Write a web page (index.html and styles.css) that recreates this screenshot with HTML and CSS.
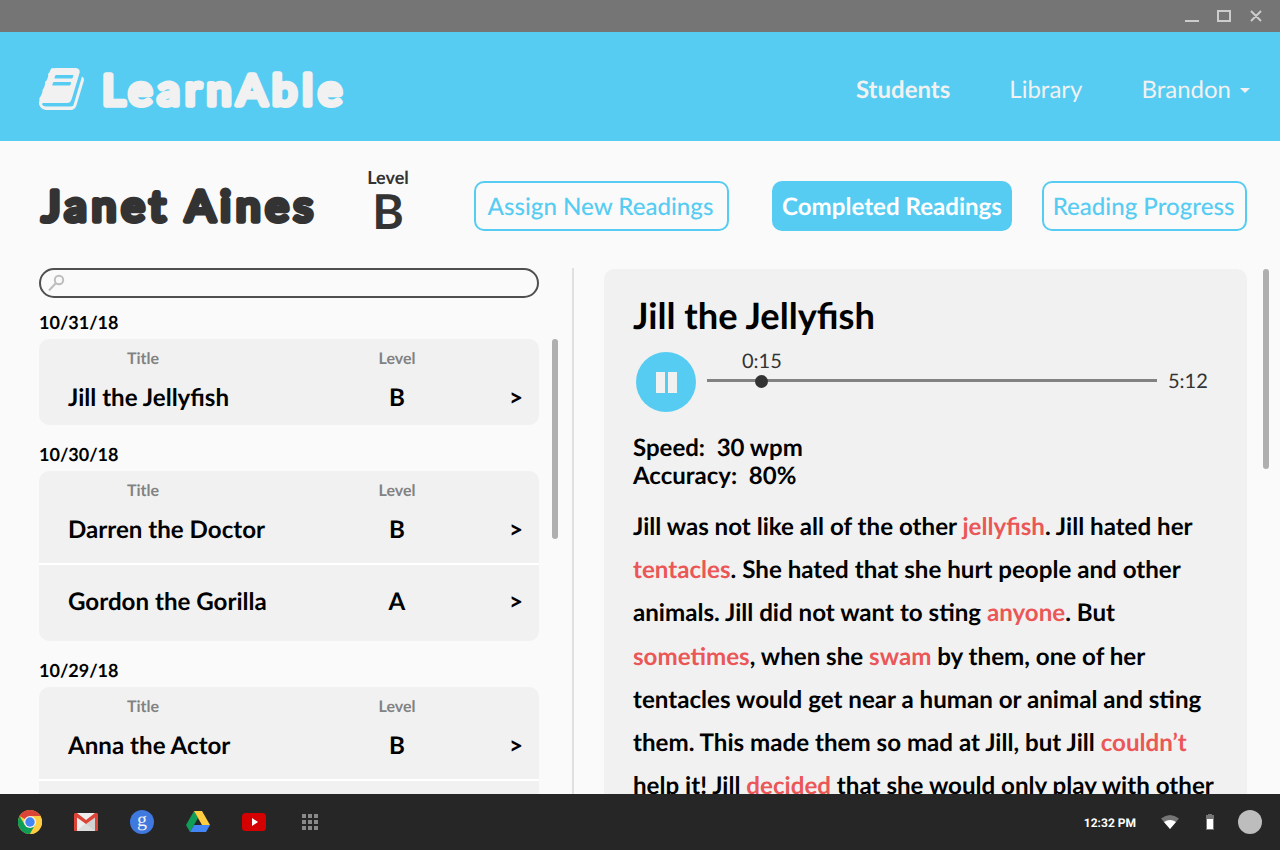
FILE: index.html
```html
<!DOCTYPE html>
<html lang="en">
<head>
<meta charset="utf-8">
<title>LearnAble</title>
<link rel="stylesheet" href="styles.css">
</head>
<body>
<div class="titlebar">
  <svg width="80" height="16" viewBox="0 0 80 16" fill="none" stroke="#ccc" stroke-width="2"><path d="M0 13h14M33 3h12v10H33zM66 3l10 10M76 3L66 13"/></svg>
</div>
<header class="header">
  <div class="brand">
    <svg class="book" viewBox="0 128 1665 1536" preserveAspectRatio="none"><path fill="#f1f1f1" d="M1639 478q40 57 18 129l-275 906q-19 64-76.5 107.5t-122.5 43.5h-923q-77 0-148.5-53.5t-99.5-131.5q-24-67-2-127 0-4 3-27t4-37q1-8-3-21.5t-3-19.5q2-11 8-21t16.5-23.5 16.5-23.5q23-38 45-91.5t30-91.5q3-10 .5-30t-.5-28q3-11 17-28t17-23q21-36 42-92t25-90q1-9-2.5-32t.5-28q4-13 22-30.5t22-22.5q19-26 42.5-84.5t27.5-96.5q1-8-3-25.5t-2-26.5q2-8 9-18t18-23 17-21q8-12 16.5-30.5t15-35 16-36 19.5-32 26.5-23.5 36-11.5 47.5 5.5l-1 3q38-9 51-9h761q74 0 114 56t18 130l-274 906q-36 119-71.5 153.5t-128.5 34.5h-869q-27 0-38 15-11 16-1 43 24 70 144 70h923q29 0 56-15.5t35-41.5l300-987q7-22 5-57 38 15 59 43zm-1064 2q-4 13 2 22.5t20 9.5h608q13 0 25.5-9.5t16.5-22.5l21-64q4-13-2-22.5t-20-9.5h-608q-13 0-25.5 9.5t-16.5 22.5zm-83 256q-4 13 2 22.5t20 9.5h608q13 0 25.5-9.5t16.5-22.5l21-64q4-13-2-22.5t-20-9.5h-608q-13 0-25.5 9.5t-16.5 22.5z"/></svg>
    <svg class="wordmark" width="260" height="60"><text class="rounded light" x="4" y="41" textLength="245" lengthAdjust="spacingAndGlyphs">LearnAble</text></svg>
  </div>
  <nav class="nav">
    <span class="active">Students</span>
    <span>Library</span>
    <span class="user">Brandon <i class="caret"></i></span>
  </nav>
</header>
<section class="subhead">
  <svg class="student" width="290" height="60"><text class="rounded dark" x="5" y="42" textLength="276" lengthAdjust="spacingAndGlyphs">Janet Aines</text></svg>
  <div class="level"><span>Level</span><b>B</b></div>
  <div class="tabs">
    <button class="tab assign">Assign New Readings</button>
    <button class="tab completed">Completed Readings</button>
    <button class="tab progress">Reading Progress</button>
  </div>
</section>
<main class="main">
  <section class="list">
    <div class="search"><svg width="18" height="18" viewBox="0 0 18 18" fill="none" stroke="#bdbdbd" stroke-width="2"><circle cx="11" cy="6" r="4.200"/><path d="M8 9L1 16.500"/></svg></div>
    <div class="scroller">
      <div class="groups">
        <h3>10/31/18</h3>
        <div class="card">
          <div class="row cols"><span class="c1">Title</span><span class="c2">Level</span></div>
          <div class="row item"><span class="name">Jill the Jellyfish</span><span class="c2">B</span><span class="go">&gt;</span></div>
        </div>
        <h3>10/30/18</h3>
        <div class="card two">
          <div class="row cols"><span class="c1">Title</span><span class="c2">Level</span></div>
          <div class="row item"><span class="name">Darren the Doctor</span><span class="c2">B</span><span class="go">&gt;</span></div>
          <div class="row item next"><span class="name">Gordon the Gorilla</span><span class="c2">A</span><span class="go">&gt;</span></div>
        </div>
        <h3>10/29/18</h3>
        <div class="card two">
          <div class="row cols"><span class="c1">Title</span><span class="c2">Level</span></div>
          <div class="row item"><span class="name">Anna the Actor</span><span class="c2">B</span><span class="go">&gt;</span></div>
          <div class="row item next"></div>
        </div>
      </div>
      <div class="thumb inner"></div>
    </div>
  </section>
  <article class="reading">
    <h1>Jill the Jellyfish</h1>
    <div class="player">
      <svg width="60" height="60" viewBox="0 0 60 60"><circle cx="30" cy="30" r="30" fill="#56ccf2"/><path fill="#f1f1f1" d="M20 20h9v21h-9zM32 20h9v21h-9z"/></svg>
      <div class="track"><span class="now">0:15</span><i class="knob"></i></div>
      <span class="total">5:12</span>
    </div>
    <div class="stats">Speed:&nbsp; 30 wpm<br>Accuracy:&nbsp; 80%</div>
    <p class="story">Jill was not like all of the other <em>jellyfish</em>. Jill hated her<br><em>tentacles</em>. She hated that she hurt people and other<br>animals. Jill did not want to sting <em>anyone</em>. But<br><em>sometimes</em>, when she <em>swam</em> by them, one of her<br>tentacles would get near a human or animal and sting<br>them. This made them so mad at Jill, but Jill <em>couldn’t</em><br>help it! Jill <em>decided</em> that she would only play with other</p>
  </article>
  <div class="thumb"></div>
</main>
<footer class="shelf">
  <div class="apps">
    <svg viewBox="0 0 24 24"><circle cx="12" cy="12" r="12" fill="#ffcd40"/><path fill="#db4437" d="M12 12L1.600 6A12 12 0 0 1 22.400 6H12z"/><path fill="#0f9d58" d="M1.600 6A12 12 0 0 0 12 24l5.200-9L12 12 6.800 15z"/><path fill="#ffcd40" d="M22.400 6H12v6l5.200 3L12 24A12 12 0 0 0 22.400 6z"/><circle cx="12" cy="12" r="6" fill="#f1f1f1"/><circle cx="12" cy="12" r="4.700" fill="#4285f4"/></svg>
    <svg viewBox="0 0 24 24"><path fill="#eee" d="M1 3h22v18H1z"/><path fill="#ddd" d="M3 21l9-8 9 8z"/><path fill="#d2d2d2" d="M12 14l9-7v14z"/><path fill="#db4437" d="M0 4.500C0 3.500.7 3 1.500 3H3l9 7 9-7h1.500c.8 0 1.500.5 1.500 1.500V20c0 .6-.4 1-1 1h-2V7.500L12 14 3 7.500V21H1c-.6 0-1-.4-1-1z"/></svg>
    <svg viewBox="0 0 24 24"><circle cx="12" cy="12" r="12" fill="#3f78df"/><text class="gletter" x="12" y="16" text-anchor="middle">g</text></svg>
    <svg viewBox="0 0 24 24"><path fill="#0f9d58" d="M8 1l4 7-8 14-4-7z"/><path fill="#ffcd40" d="M8 1h8l8 14h-8z"/><path fill="#4285f4" d="M8 15h16l-4 7H4z"/></svg>
    <svg viewBox="0 0 24 24"><rect y="3" width="24" height="18" rx="3.500" fill="#d50000"/><path fill="#fff" d="M10 8l6 4-6 4z"/></svg>
    <svg viewBox="0 0 24 24"><path fill="#8a8a8a" d="M4 4h4v4H4zM10 4h4v4h-4zM16 4h4v4h-4zM4 10h4v4H4zM10 10h4v4h-4zM16 10h4v4h-4zM4 16h4v4H4zM10 16h4v4h-4zM16 16h4v4h-4z"/></svg>
  </div>
  <div class="status">
    <span class="clock">12:32 PM</span>
    <svg class="wifi" width="18" height="14" viewBox="0 0 18 14"><path fill="#757575" d="M0 3.500Q9-3.500 18 3.500L9 14z"/><path fill="#fff" d="M3 7q6-4 12 0l-6 7z"/></svg>
    <svg class="battery" width="8" height="16" viewBox="0 0 8 16"><path fill="#757575" d="M0 1h2V0h4v1h2v15H0z"/><path fill="#fff" d="M1 5h6v10H1z"/></svg>
    <i class="avatar"></i>
  </div>
</footer>
</body>
</html>
```
FILE: styles.css
```css
* { box-sizing: border-box; }
body { margin: 0; width: 1280px; height: 850px; overflow: hidden; display: flex; flex-direction: column; background: #fafafa; font-family: Lato, "Open Sans", sans-serif; color: #000; text-rendering: geometricPrecision; }
svg { display: block; flex: none; }
.titlebar { height: 32px; flex: none; background: #757575; display: flex; align-items: center; justify-content: flex-end; padding-right: 15px; }
.header { height: 109px; flex: none; background: #56ccf2; display: flex; justify-content: space-between; padding: 0 30px 0 39px; color: #f1f1f1; }
.brand { display: flex; padding-top: 32px; }
.book { width: 45px; height: 42px; margin-top: 4px; }
.wordmark { margin-left: 14px; }
.rounded { font: 400 42px Lato, sans-serif; letter-spacing: 5px; stroke-width: 5.5px; stroke-linejoin: round; }
.light { fill: #f1f1f1; stroke: #f1f1f1; }
.dark { fill: #333; stroke: #333; }
.nav { display: flex; gap: 59px; padding-top: 43px; font-size: 24px; line-height: 29px; }
.active { font-weight: 700; }
.user { display: flex; align-items: center; gap: 9px; height: 29px; }
.caret { border: 5.500px solid transparent; border-top-color: #f1f1f1; border-bottom: 0; margin-top: 1px; }
.subhead { height: 127px; flex: none; display: flex; color: #333; padding-left: 37px; }
.student { margin-top: 38px; }
.level { width: 64px; padding-top: 26px; display: flex; flex-direction: column; align-items: center; margin-right: 54px; margin-left: 29px; }
.level span { font-size: 18px; font-weight: 700; line-height: 21px; }
.level b { font-size: 48px; line-height: 48px; }
.tabs { display: flex; padding-top: 40px; }
.tab { height: 50px; border: 2px solid #56ccf2; border-radius: 10px; background: #fafafa; color: #56ccf2; font: 500 24.1px Lato, sans-serif; text-rendering: geometricPrecision; padding: 1px 2px 0 0; white-space: nowrap; }
.assign { width: 255px; margin-right: 43px; }
.completed { width: 240px; margin-right: 30px; padding-right: 0; background: #56ccf2; color: #fff; font-weight: 700; }
.progress { width: 205px; }
.main { height: 526px; flex: none; display: flex; overflow: hidden; padding-left: 39px; }
.list { width: 535px; border-right: 2px solid #e0e0e0; flex: none; }
.search { width: 500px; height: 30px; border: 2px solid #4f4f4f; border-radius: 15px; padding: 4px 0 0 7px; }
.scroller { display: flex; gap: 13px; }
.groups { width: 500px; }
h3 { margin: 0; height: 41px; padding-top: 13px; font-size: 18px; line-height: 22px; }
.groups .card + h3 { height: 46px; padding-top: 18px; }
.card { height: 86px; background: #f1f1f1; border-radius: 10px; overflow: hidden; }
.two { height: 170px; }
.row { display: grid; grid-template-columns: 29px 270px 118px 83px; }
.cols { color: #828282; font-size: 16px; font-weight: 700; line-height: 20px; padding-top: 10px; text-align: center; }
.c1 { grid-column: 2; padding-right: 120px; }
.c2 { grid-column: 3; text-align: center; }
.item { font-size: 24.13px; font-weight: 700; line-height: 30px; padding-top: 14px; height: 62px; }
.name { grid-column: 2; }
.go { grid-column: 4; padding-left: 53px; }
.next { height: 80px; border-top: 2px solid #fff; padding-top: 22px; }
.thumb { width: 6px; height: 200px; border-radius: 3px; background: #afafaf; margin: 1px 0 0 16px; flex: none; }
.inner { margin: 41px 0 0; }
.reading { width: 643px; height: 600px; margin: 1px 0 0 30px; border-radius: 10px; background: #f1f1f1; padding: 24px 0 0 29px; flex: none; }
h1 { margin: 0; font-size: 36.250px; line-height: 44px; }
.player { display: flex; margin: 15px 0 0 3px; height: 60px; color: #333; font-size: 20px; }
.track { position: relative; width: 450px; height: 3px; background: #828282; margin: 27px 11px 0; }
.now { position: absolute; left: 35px; top: -30px; line-height: 24px; }
.knob { position: absolute; left: 48px; top: -4px; width: 13px; height: 13px; border-radius: 50%; background: #333; }
.total { padding-top: 17px; line-height: 24px; }
.stats { margin-top: 22px; font-size: 24px; font-weight: 700; line-height: 28px; }
.story { margin: 15px 0 0; font-size: 24.15px; font-weight: 700; line-height: 43.2px; white-space: nowrap; }
.story em { font-style: normal; color: #eb5757; }
.shelf { height: 56px; flex: none; background: #262626; display: flex; justify-content: space-between; padding: 16px 18px; position: relative; }
.apps { display: flex; gap: 32px; }
.apps svg { width: 24px; height: 24px; }
.gletter { font: 20px "Liberation Serif", serif; fill: #f1f1f1; }
.status { display: flex; align-items: center; height: 24px; }
.clock { font: 700 12px Roboto, sans-serif; color: #fff; margin-right: 25px; padding-top: 1px; }
.wifi { margin-right: 27px; }
.battery { margin-right: 24px; }
.avatar { width: 24px; height: 24px; border-radius: 50%; background: #bdbdbd; }
```
